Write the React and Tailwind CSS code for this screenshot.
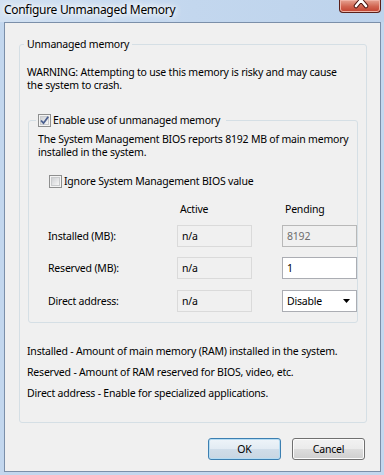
function CheckBox({ checked }) {
  return (
    <span className="flex h-[13px] w-[13px] shrink-0 items-center justify-center border border-[#8e8f8f] bg-[#f4f4f4]">
      <span className="relative flex h-[9px] w-[9px] items-center justify-center border border-[#c9cbcd] bg-gradient-to-br from-[#cfd1d4] to-[#f6f6f6]">
        {checked && (
          <svg viewBox="0 0 11 11" className="absolute -left-[2px] -top-[2px] h-[11px] w-[11px]">
            <path d="M2 5.5 L4.5 8.2 L9.2 1.8" fill="none" stroke="#4a5f8f" strokeWidth="1.8" />
          </svg>
        )}
      </span>
    </span>
  )
}

function Field({ children, variant }) {
  const styles = {
    readonly: 'border-[#dadada] bg-[#f0f0f0] text-black',
    disabled: 'border-[#b8b8b8] bg-[#f0f0f0] text-[#6d6d6d]',
    edit: 'border-[#abadb3] bg-white text-black',
  }
  return (
    <div className={`flex h-[22px] w-[75px] items-center border pl-[4px] leading-[13px] ${styles[variant]}`}>
      {children}
    </div>
  )
}

function Button({ children, isDefault }) {
  return (
    <button
      className={`flex h-[22px] w-[73px] items-center justify-center rounded-[3px] border leading-[13px] ${
        isDefault
          ? 'border-[#3c7fb1] bg-[linear-gradient(#eef4f9_0%,#e2ebf3_50%,#d0dde9_51%,#c9d6e2_100%)] shadow-[inset_0_0_0_1px_#b5dcf3]'
          : 'border-[#707070] bg-[linear-gradient(#f2f2f2_0%,#ebebeb_50%,#dddddd_51%,#cfcfcf_100%)] shadow-[inset_0_0_0_1px_#fcfcfc]'
      }`}
    >
      {children}
    </button>
  )
}

const rows = [
  { label: 'Installed (MB):', active: 'n/a', pending: <Field variant="disabled">8192</Field>, gap: 'mt-[9px]' },
  { label: 'Reserved (MB):', active: 'n/a', pending: <Field variant="edit">1</Field>, gap: 'mt-[10px]' },
  {
    label: 'Direct address:',
    active: 'n/a',
    pending: (
      <div className="flex h-[22px] w-[75px] items-center justify-between border border-[#abadb3] bg-white pl-[4px] pr-[6px] leading-[13px]">
        Disable
        <svg viewBox="0 0 7 4" className="h-[4px] w-[7px]">
          <path d="M0 0 H7 L3.5 4 Z" fill="#000" />
        </svg>
      </div>
    ),
    gap: 'mt-[11px]',
  },
]

export default function App() {
  return (
    <div className="flex h-[475px] w-[384px] flex-col bg-[#c3d7ee] pb-[3px] pl-[4px] pr-[3px] font-['Segoe_UI','Noto_Sans',sans-serif] text-[10.5px] tracking-[-0.2px] text-black">
      <div className="-ml-[4px] -mr-[3px] flex h-[22px] items-start justify-between bg-gradient-to-r from-[#d2e1f2] via-[#c3d7ee] to-[#bdd3ec] pl-[4px] pr-[3px]">
        <span className="mt-[1px] text-[12px] leading-[18px] tracking-[-0.3px] text-black [text-shadow:0_0_8px_#fff,0_0_8px_#fff,0_0_4px_#fff]">
          Configure Unmanaged Memory
        </span>
        <div className="relative h-[13px] w-[42px] overflow-hidden rounded-b-[4px] border border-t-0 border-[#5a2019] bg-[linear-gradient(#e7a493_0%,#d0634f_55%,#c2412f_100%)] shadow-[inset_0_0_0_1px_#f0b3a6]">
          <svg viewBox="0 0 42 13" className="absolute inset-0 h-[13px] w-[42px]">
            <path d="M16 -6 L26 6 M26 -6 L16 6" stroke="#4a1510" strokeWidth="4.5" strokeLinecap="round" />
            <path d="M16 -6 L26 6 M26 -6 L16 6" stroke="#fff" strokeWidth="2.6" strokeLinecap="round" />
          </svg>
        </div>
      </div>

      <div className="flex flex-1 flex-col border border-[#7b8fa9] bg-[#f0f0f0]">
        <fieldset className="ml-[14px] mr-[13px] mt-[14px] rounded-[3px] border border-[#d5dfe5] pb-[22px]">
          <legend className="ml-[4px] px-[3px] leading-[14px]">Unmanaged memory</legend>

          <div className="mt-[15px] whitespace-nowrap pl-[7px] leading-[13px]">
            <p>WARNING: Attempting to use this memory is risky and may cause</p>
            <p>the system to crash.</p>
          </div>

          <fieldset className="mx-[8px] mt-[21px] rounded-[3px] border border-[#d5dfe5] pb-[10px]">
            <legend className="ml-[7px] flex h-[14px] items-center gap-[2px] pl-[2px] pr-[6px]">
              <CheckBox checked />
              <span className="leading-[14px]">Enable use of unmanaged memory</span>
            </legend>

            <div className="mt-[6px] whitespace-nowrap pl-[9px] leading-[13px]">
              <p>The System Management BIOS reports 8192 MB of main memory</p>
              <p>installed in the system.</p>
            </div>

            <div className="mt-[15px] flex h-[14px] items-center gap-[2px] pl-[20px]">
              <CheckBox />
              <span className="leading-[14px]">Ignore System Management BIOS value</span>
            </div>

            <div className="mt-[15px] grid grid-cols-[99px_75px_75px] gap-x-[30px] pl-[19px] leading-[13px]">
              <span />
              <span className="pl-[3px]">Active</span>
              <span className="pl-[3px]">Pending</span>
            </div>

            {rows.map((r) => (
              <div key={r.label} className={`${r.gap} grid grid-cols-[99px_75px_75px] items-center gap-x-[30px] pl-[19px]`}>
                <span className="leading-[13px]">{r.label}</span>
                <Field variant="readonly">{r.active}</Field>
                {r.pending}
              </div>
            ))}
          </fieldset>

          <div className="mt-[22px] flex flex-col gap-[8px] pl-[7px] leading-[13px]">
            <p>Installed - Amount of main memory (RAM) installed in the system.</p>
            <p>Reserved - Amount of RAM reserved for BIOS, video, etc.</p>
            <p>Direct address - Enable for specialized applications.</p>
          </div>
        </fieldset>

        <div className="mr-[15px] mt-[15px] flex justify-end gap-[11px]">
          <Button isDefault>OK</Button>
          <Button>Cancel</Button>
        </div>
      </div>
    </div>
  )
}
